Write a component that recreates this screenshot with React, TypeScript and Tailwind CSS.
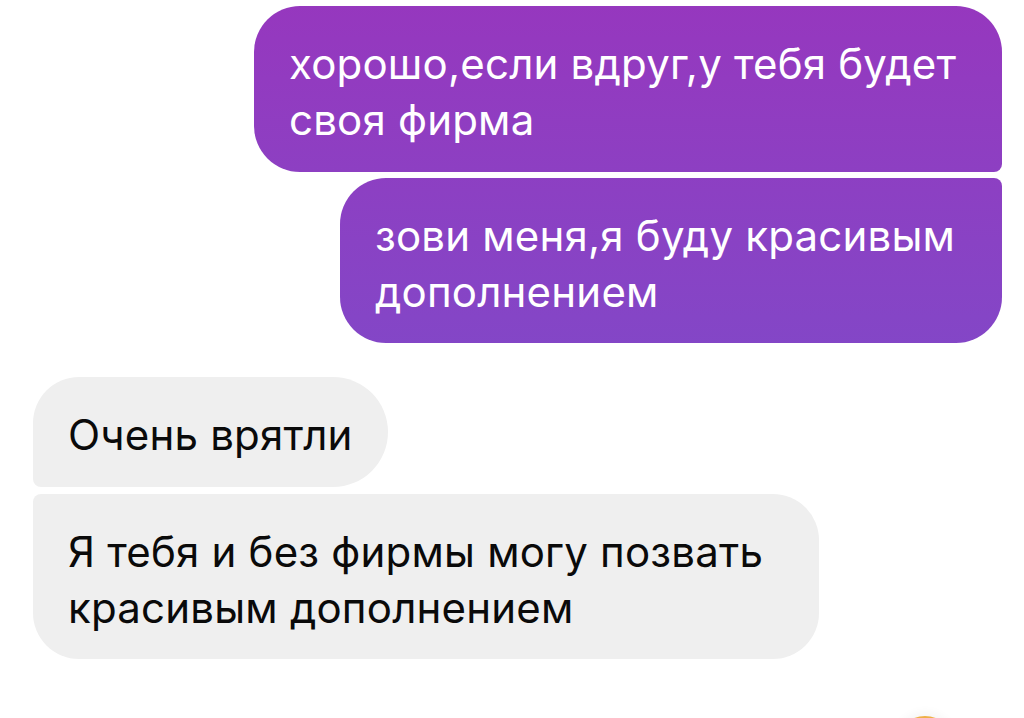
import React from "react";

type Side = "out" | "in";

function Bubble({
  side,
  className,
  children,
}: {
  side: Side;
  className: string;
  children: React.ReactNode;
}) {
  const base =
    side === "out"
      ? "self-end text-white bg-fixed bg-linear-to-b from-[#9637be] to-[#6c52d0]"
      : "self-start text-[#0a0a0a] bg-[#efefef]";
  return (
    <div
      className={`${base} ${className} px-[35px] pt-[30px] pb-[24px] text-[42px] leading-[56px] tracking-[0.2px] whitespace-nowrap`}
    >
      {children}
    </div>
  );
}

export default function App() {
  return (
    <div className="w-[1024px] h-[718px] overflow-hidden bg-white flex flex-col font-['Inter','Noto_Sans',sans-serif]">
      <div className="h-[1px] bg-white" />
      <div className="h-[1px] bg-[#e4e4e4]" />
      <div className="flex flex-col pt-[6px] pl-[33px] pr-[22px]">
        <Bubble side="out" className="w-[748px] h-[166px] rounded-[46px] rounded-br-[8px]">
          хорошо,если вдруг,у тебя будет
          <br />
          своя фирма
        </Bubble>
        <Bubble side="out" className="mt-[6px] w-[662px] h-[165px] rounded-[46px] rounded-tr-[8px]">
          зови меня,я буду красивым
          <br />
          дополнением
        </Bubble>
        <Bubble side="in" className="mt-[34px] w-[355px] h-[110px] rounded-l-[46px] rounded-r-[55px] rounded-bl-[8px]">
          Очень врятли
        </Bubble>
        <Bubble side="in" className="mt-[7px] w-[786px] h-[165px] rounded-[46px] rounded-tl-[8px]">
          Я тебя и без фирмы могу позвать
          <br />
          красивым дополнением
        </Bubble>
        <div className="flex justify-end mt-[57px] mr-[47px]">
          <div className="w-[60px] h-[60px] rounded-full bg-linear-to-b from-[#eeb048] to-[#e08a2c] shadow-[0_-4px_10px_rgba(0,0,0,0.04)]" />
        </div>
      </div>
    </div>
  );
}
